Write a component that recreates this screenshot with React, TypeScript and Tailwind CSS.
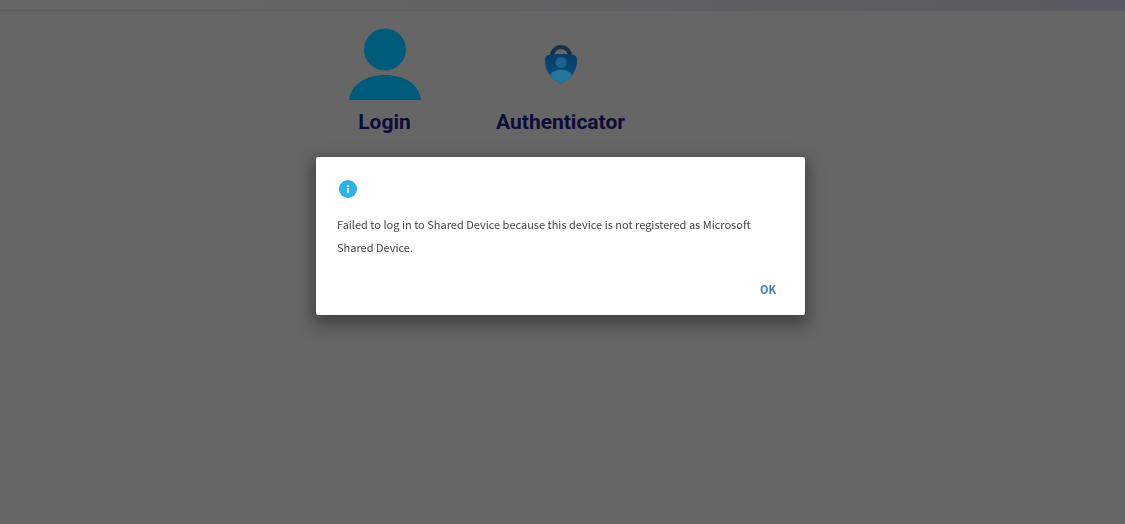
const UserIcon: React.FC = () => (
  <svg viewBox="0 0 72 72" className="h-18 w-18" aria-hidden="true">
    <circle cx="36" cy="21.5" r="21" fill="#005b7b" />
    <path d="M0 72C2 56 17 47 36 47s34 9 36 25z" fill="#005b7b" />
  </svg>
);

const AuthenticatorIcon: React.FC = () => (
  <svg viewBox="0 0 32 40" className="h-10 w-8" aria-hidden="true">
    <defs>
      <linearGradient id="shield" x1="0" y1="0" x2="0" y2="1">
        <stop offset="0" stopColor="#08375f" />
        <stop offset="1" stopColor="#07507f" />
      </linearGradient>
      <clipPath id="shieldClip">
        <path d="M16 10c5 0 9 0 13 1 2 1 3 2 3 5 0 11-5 17-13 22-2 2-4 2-6 0C5 33 0 27 0 16c0-3 1-4 3-5 4-1 8-1 13-1z" />
      </clipPath>
    </defs>
    <path d="M7 14v-2a9 9 0 0 1 18 0v2" fill="none" stroke="#182f45" strokeWidth="4" />
    <g clipPath="url(#shieldClip)">
      <path d="M0 0h32v40H0z" fill="url(#shield)" />
      <circle cx="16" cy="18.5" r="5.5" fill="#1b658c" />
      <ellipse cx="16" cy="35" rx="12" ry="9.5" fill="#25769d" />
    </g>
  </svg>
);

const InfoIcon: React.FC = () => (
  <svg viewBox="0 0 18 18" className="h-[18px] w-[18px]" role="img" aria-label="Information">
    <circle cx="9" cy="9" r="9" fill="#2db2e8" />
    <path d="M8 5h2v2H8zM8 8h2v5H8z" fill="#d5f0fb" />
  </svg>
);

const App: React.FC = () => {
  return (
    <div className="min-h-screen bg-[#666666] font-[Roboto,sans-serif]">
      <header className="h-[11px] border-b border-[#5f5f60] bg-linear-to-r from-[#666666] from-20% via-[#606062] via-60% to-[#585a63]" />

      {/* Home tiles */}
      <main className="mx-auto flex max-w-[532px] pt-4 pr-1">
        <a href="#login" className="flex w-1/3 flex-col items-center text-[21px] leading-7 font-bold text-[#0d0b38]">
          <span className="flex h-[74px] items-center">
            <UserIcon />
          </span>
          <span className="pt-[7px]">Login</span>
        </a>
        <a href="#authenticator" className="flex w-1/3 flex-col items-center text-[21px] leading-7 font-bold text-[#0d0b38]">
          <span className="flex h-[74px] items-center">
            <AuthenticatorIcon />
          </span>
          <span className="pt-[7px]">Authenticator</span>
        </a>
      </main>

      {/* Login error dialog */}
      <div className="fixed inset-0 flex items-start justify-center pt-[157px] pr-1">
        <div
          role="alertdialog"
          aria-modal="true"
          aria-describedby="message"
          className="w-full max-w-[489px] rounded-xs bg-white px-[21px] pt-[23px] pb-3 font-['Noto_Sans_CJK_SC',sans-serif] shadow-[0_6px_16px_4px_rgba(0,0,0,0.35)]"
        >
          <div className="px-0.5">
            <InfoIcon />
          </div>
          <p id="message" className="pt-[15px] text-[11px] leading-[23px] text-[#444444]">
            Failed to log in to Shared Device because this device is not registered as Microsoft Shared Device.
          </p>
          <div className="flex justify-end pt-4">
            <button type="button" className="px-2 py-1 text-[11px] leading-5 font-bold text-[#3b7fb4]">
              OK
            </button>
          </div>
        </div>
      </div>
    </div>
  );
};

export default App;
